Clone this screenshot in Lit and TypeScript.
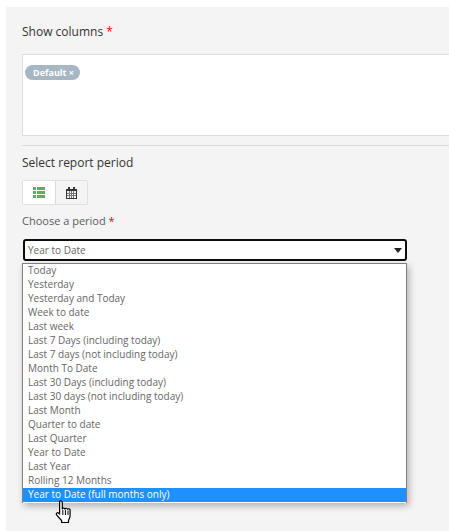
import { LitElement, html, css } from 'lit';
import { customElement } from 'lit/decorators.js';

const PERIODS = [
  'Today',
  'Yesterday',
  'Yesterday and Today',
  'Week to date',
  'Last week',
  'Last 7 Days (including today)',
  'Last 7 days (not including today)',
  'Month To Date',
  'Last 30 Days (including today)',
  'Last 30 days (not including today)',
  'Last Month',
  'Quarter to date',
  'Last Quarter',
  'Year to Date',
  'Last Year',
  'Rolling 12 Months',
  'Year to Date (full months only)',
];

@customElement('app-root')
export class AppRoot extends LitElement {
  static styles = css`
    :host {
      display: block;
      height: 531px;
      overflow: hidden;
      background: #fff;
      font-family: 'Open Sans', sans-serif;
      color: #444;
    }
    .panel {
      position: relative;
      box-sizing: border-box;
      height: 524px;
      margin: 7px 0 0 6px;
      padding: 16px 0 0 16px;
      background: #f4f4f4;
      overflow: hidden;
    }
    .label {
      font-size: 12px;
      line-height: 18px;
      color: #333;
    }
    .req {
      color: #f00;
    }
    .columns {
      box-sizing: border-box;
      width: 500px;
      height: 82px;
      margin-top: 13px;
      padding: 4px 2px;
      background: #fff;
      border: 1px solid #ddd;
    }
    .badge {
      display: inline-block;
      height: 15px;
      padding: 0 6px 0 8px;
      border-radius: 8px;
      background: #a6b6c2;
      color: #fff;
      font-size: 9px;
      font-weight: 700;
      line-height: 15px;
    }
    hr {
      width: 500px;
      margin: 9px 0 0;
      border: 0;
      border-top: 1px solid #ddd;
    }
    .section {
      margin-top: 8px;
    }
    .toggle {
      display: flex;
      width: 66px;
      height: 25px;
      margin-top: 8px;
      box-sizing: border-box;
      border: 1px solid #e0e0e0;
      border-radius: 2px;
    }
    .toggle div {
      display: flex;
      align-items: center;
      justify-content: center;
      box-sizing: border-box;
    }
    .toggle .on {
      width: 32px;
      background: #fff;
    }
    .toggle .off {
      flex: 1;
      border-left: 1px solid #ddd;
    }
    .choose {
      margin-top: 7px;
      font-size: 11px;
      line-height: 18px;
      color: #5b5b66;
    }
    .select {
      display: flex;
      align-items: center;
      justify-content: space-between;
      box-sizing: border-box;
      width: 384px;
      height: 22px;
      margin: 9px 0 0 1px;
      padding: 0 3px 0 3px;
      background: #fff;
      border: 2px solid #0d0d0d;
      border-radius: 3px;
      font-size: 10px;
      color: #666;
    }
    .arrow {
      width: 0;
      height: 0;
      border-left: 4px solid transparent;
      border-right: 4px solid transparent;
      border-top: 5px solid #222;
    }
    .menu {
      box-sizing: border-box;
      width: 385px;
      margin-top: 2px;
      padding-bottom: 1px;
      background: #fff;
      border: 1px solid #808080;
      border-width: 1px 1px 0 1px;
      box-shadow: 2px 3px 7px rgba(0, 0, 0, 0.28);
    }
    .item {
      height: 14px;
      padding-left: 5px;
      font-size: 10px;
      line-height: 12px;
      color: #666;
      white-space: nowrap;
    }
    .item.sel {
      background: #1e90ff;
      color: #fff;
    }
    .cursor {
      position: absolute;
      left: 49px;
      top: 493px;
    }
  `;

  render() {
    return html`
      <div class="panel">
        <div class="label">Show columns <span class="req">*</span></div>
        <div class="columns"><span class="badge">Default ×</span></div>
        <hr />
        <div class="label section">Select report period</div>
        <div class="toggle">
          <div class="on">
            <svg width="12" height="11" viewBox="0 0 12 11">
              <path fill="#56b356" d="M0 0h3v3H0zM4 0h8v3H4zM0 4h3v3H0zM4 4h8v3H4zM0 8h3v3H0zM4 8h8v3H4z" />
            </svg>
          </div>
          <div class="off">
            <svg width="11" height="12" viewBox="0 0 11 12">
              <path fill="#333" d="M2 0h2v2h3V0h2v2h2v10H0V2h2zM1 4v7h9V4z" />
              <path fill="#777" d="M3 4h1v7H3zM5 4h1v7H5zM7 4h1v7H7zM1 6h9v1H1zM1 8h9v1H1z" />
            </svg>
          </div>
        </div>
        <div class="choose">Choose a period <span class="req">*</span></div>
        <div class="select"><span>Year to Date</span><span class="arrow"></span></div>
        <div class="menu">
          ${PERIODS.map(
            (p, i) => html`<div class="item ${i === PERIODS.length - 1 ? 'sel' : ''}">${p}</div>`
          )}
        </div>
        <svg class="cursor" width="20" height="25" viewBox="0 0 20 25">
          <path
            fill="#fff"
            stroke="#000"
            stroke-width="1.2"
            stroke-linejoin="round"
            d="M4.5 1.500c1 -1 2.600 -.6 2.800.9V9c.2-1.300 2.400-1.300 2.700.1.3-1.200 2.400-1.100 2.700.3.4-1 2.300-.8 2.400.7v5.400c0 2.200-.8 3.400-1.600 4.800v2.200H6.600v-2c-1.600-1.600-3.200-3.400-5-5.600-1-1.300.7-2.900 2-1.800l1 1V2.400z"
          />
          <path stroke="#000" fill="none" d="M7.800 10v5M10.400 10v5M13 10.500v4.500" />
        </svg>
      </div>
    `;
  }
}
